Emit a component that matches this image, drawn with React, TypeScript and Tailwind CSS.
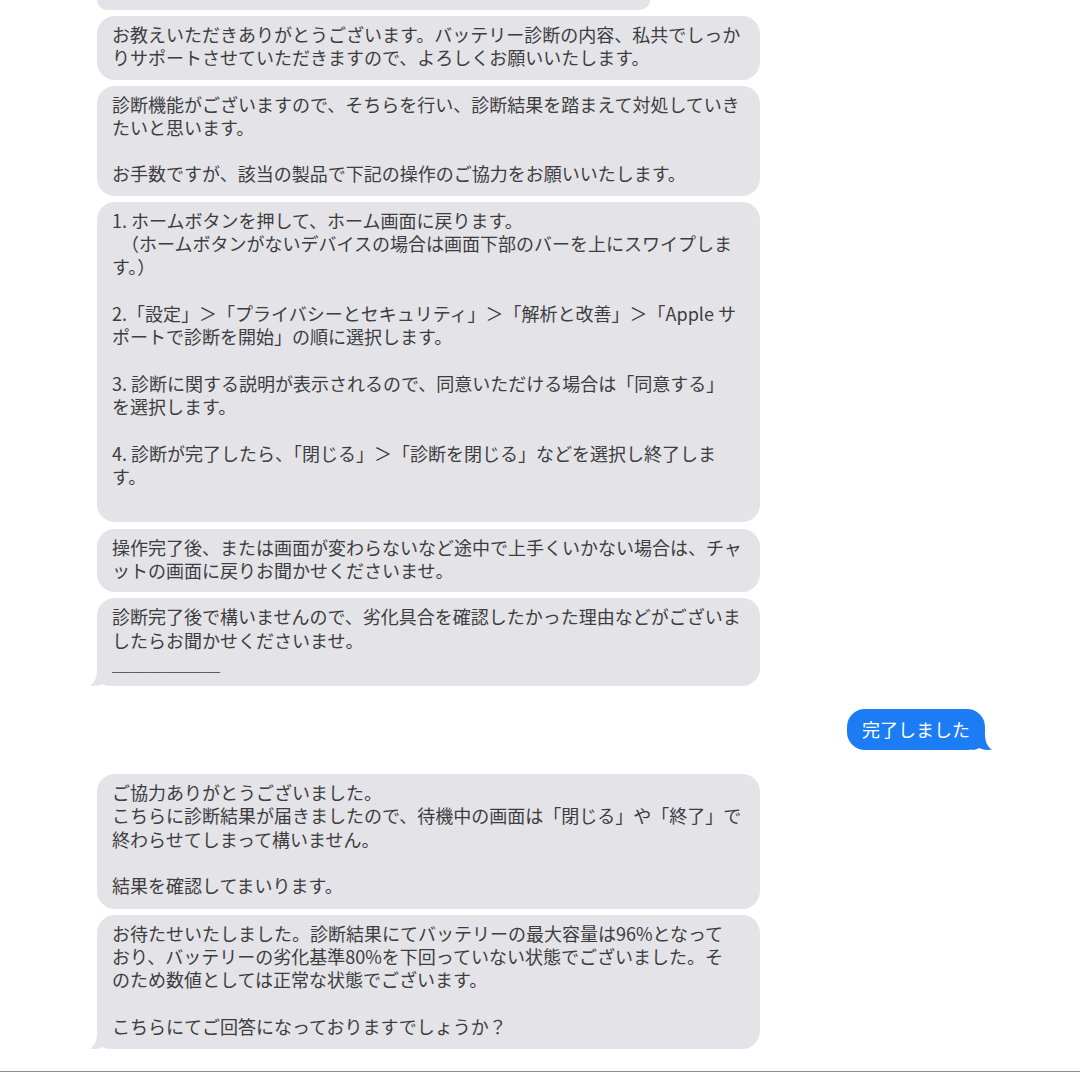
const GRAY = '#e3e3e8';

type BubbleProps = {
  lines: string[];
  tail?: boolean;
  className?: string;
};

function Tail({ color, right }: { color: string; right?: boolean }) {
  return (
    <svg
      viewBox="0 0 20 16"
      className={right ? 'absolute -right-[7px] bottom-0 w-[20px] h-[16px] -scale-x-100' : 'absolute -left-[7px] bottom-0 w-[20px] h-[16px]'}
    >
      <path
        d="M7 0 C7 8 4.5 13 0 15.5 C4 16.3 9 16 13 14 C15 15.3 17 16 20 16 L20 0 Z"
        fill={color}
      />
    </svg>
  );
}

function Bubble({ lines, tail, className = '' }: BubbleProps) {
  return (
    <div
      className={`relative w-[663px] rounded-[18px] bg-[#e3e3e8] pl-[15px] pr-[12px] pt-[7px] pb-[10px] text-[18px] leading-[23.3px] text-[#3d3d40] ${className}`}
    >
      {lines.map((line, i) => (
        <div key={i} className="whitespace-nowrap">
          {line === '' ? '\u00a0' : line}
        </div>
      ))}
      {tail && <Tail color={GRAY} />}
    </div>
  );
}

export default function App() {
  return (
    <div
      className="w-[1080px] h-[1074px] bg-white overflow-hidden flex flex-col"
      style={{ fontFamily: '"Noto Sans CJK JP", "Noto Sans", sans-serif' }}
    >
      <div className="pl-[97px] flex flex-col gap-[6px]">
        <div className="w-[553px] h-[10px] rounded-b-[18px] bg-[#e3e3e8]" />
        <Bubble
          lines={[
            'お教えいただきありがとうございます。バッテリー診断の内容、私共でしっか',
            'りサポートさせていただきますので、よろしくお願いいたします。',
          ]}
        />
        <Bubble
          lines={[
            '診断機能がございますので、そちらを行い、診断結果を踏まえて対処していき',
            'たいと思います。',
            '',
            'お手数ですが、該当の製品で下記の操作のご協力をお願いいたします。',
          ]}
        />
        <Bubble
          lines={[
            '1. ホームボタンを押して、ホーム画面に戻ります。',
            '　（ホームボタンがないデバイスの場合は画面下部のバーを上にスワイプしま',
            'す。）',
            '',
            '2.「設定」＞「プライバシーとセキュリティ」＞「解析と改善」＞「Apple サ',
            'ポートで診断を開始」の順に選択します。',
            '',
            '3. 診断に関する説明が表示されるので、同意いただける場合は「同意する」',
            'を選択します。',
            '',
            '4. 診断が完了したら、「閉じる」＞「診断を閉じる」などを選択し終了しま',
            'す。',
            '',
          ]}
        />
        <Bubble
          className="mt-[1px]"
          lines={[
            '操作完了後、または画面が変わらないなど途中で上手くいかない場合は、チャ',
            'ットの画面に戻りお聞かせくださいませ。',
          ]}
        />
        <Bubble
          tail
          className="pb-[11px]"
          lines={[
            '診断完了後で構いませんので、劣化具合を確認したかった理由などがございま',
            'したらお聞かせくださいませ。',
            '＿＿＿＿＿＿',
          ]}
        />
      </div>

      {/* sent message */}
      <div className="mt-[23px] flex justify-end pr-[95px]">
        <div className="relative h-[41px] rounded-[18px] bg-[#1c7cf4] px-[15px] flex items-center text-[18px] text-white">
          完了しました
          <Tail color="#1c7cf4" right />
        </div>
      </div>

      <div className="mt-[24px] pl-[97px] flex flex-col gap-[6px]">
        <Bubble
          className="pb-[11px]"
          lines={[
            'ご協力ありがとうございました。',
            'こちらに診断結果が届きましたので、待機中の画面は「閉じる」や「終了」で',
            '終わらせてしまって構いません。',
            '',
            '結果を確認してまいります。',
          ]}
        />
        <Bubble
          tail
          className="pb-[11px]"
          lines={[
            'お待たせいたしました。診断結果にてバッテリーの最大容量は96%となって',
            'おり、バッテリーの劣化基準80%を下回っていない状態でございました。そ',
            'のため数値としては正常な状態でございます。',
            '',
            'こちらにてご回答になっておりますでしょうか？',
          ]}
        />
      </div>

      <div className="mt-auto mb-[2px] h-[1px] bg-[#8a8a8a]" />
    </div>
  );
}
